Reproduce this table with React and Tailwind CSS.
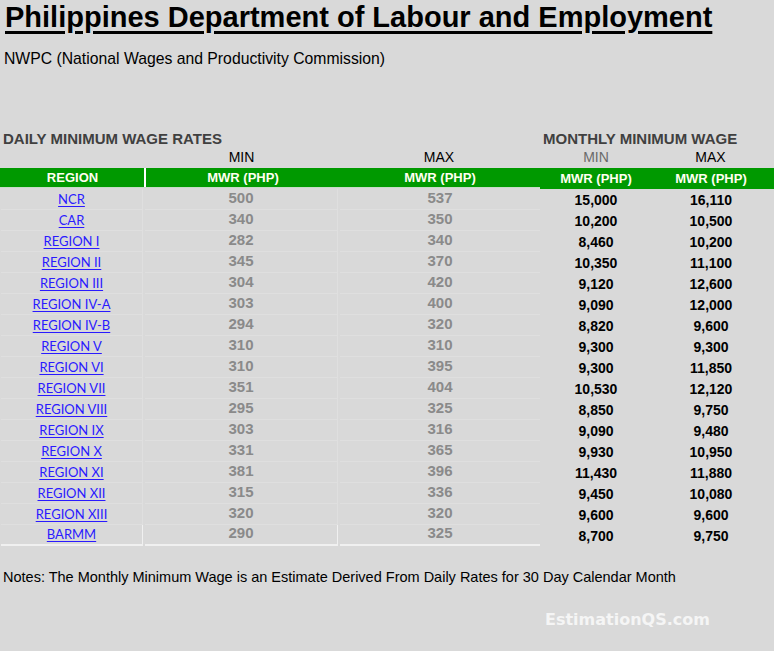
import React from "react";

const rows = [
  ["NCR", 500, 537, "15,000", "16,110"],
  ["CAR", 340, 350, "10,200", "10,500"],
  ["REGION I", 282, 340, "8,460", "10,200"],
  ["REGION II", 345, 370, "10,350", "11,100"],
  ["REGION III", 304, 420, "9,120", "12,600"],
  ["REGION IV-A", 303, 400, "9,090", "12,000"],
  ["REGION IV-B", 294, 320, "8,820", "9,600"],
  ["REGION V", 310, 310, "9,300", "9,300"],
  ["REGION VI", 310, 395, "9,300", "11,850"],
  ["REGION VII", 351, 404, "10,530", "12,120"],
  ["REGION VIII", 295, 325, "8,850", "9,750"],
  ["REGION IX", 303, 316, "9,090", "9,480"],
  ["REGION X", 331, 365, "9,930", "10,950"],
  ["REGION XI", 381, 396, "11,430", "11,880"],
  ["REGION XII", 315, 336, "9,450", "10,080"],
  ["REGION XIII", 320, 320, "9,600", "9,600"],
  ["BARMM", 290, 325, "8,700", "9,750"],
];

const arial = { fontFamily: '"Liberation Sans", Arial, sans-serif' };

export default function App() {
  return (
    <div className="w-[774px] h-[651px] bg-[#d9d9d9] overflow-hidden text-black" style={arial}>
      <div className="pl-[5px] pt-[1px]">
        <h1 className="text-[29px] leading-[32px] font-bold underline decoration-[3px] underline-offset-[4px]">
          Philippines Department of Labour and Employment
        </h1>
      </div>
      <div className="pl-[4px] mt-[17px] text-[15.75px] leading-[18px]">
        NWPC (National Wages and Productivity Commission)
      </div>

      <div className="mt-[63px] flex text-[15px] leading-[16px] font-bold text-[#404040]">
        <div className="w-[540px] pl-[3px]">DAILY MINIMUM WAGE RATES</div>
        <div className="pl-[3px]">MONTHLY MINIMUM WAGE</div>
      </div>
      <div className="mt-[2px] flex text-[14px] leading-[16px]">
        <div className="w-[145px]" />
        <div className="w-[193px] text-center">MIN</div>
        <div className="w-[202px] text-center">MAX</div>
        <div className="w-[112px] text-center text-[#6a6a6a]">MIN</div>
        <div className="w-[117px] text-center">MAX</div>
      </div>

      <div className="mt-[3px] flex h-[21px] text-[13px] font-bold text-[#fffff0]">
        <div className="w-[540px] flex h-[20px] bg-[#009900] border-b border-[#c6dcc6]">
          <div className="w-[143px] ml-[1px] flex items-center justify-center">REGION</div>
          <div className="w-[2px] bg-white" />
          <div className="w-[194px] flex items-center justify-center">MWR (PHP)</div>
          <div className="w-[200px] flex items-center justify-center">MWR (PHP)</div>
        </div>
        <div className="w-[234px] flex h-[21px] bg-[#009900]">
          <div className="w-[112px] flex items-center justify-center">MWR (PHP)</div>
          <div className="w-[118px] flex items-center justify-center">MWR (PHP)</div>
        </div>
      </div>

      <div className="flex flex-col">
        {rows.map((r, i) => {
          const last = i === rows.length - 1;
          const cell = last
            ? "border-b-2 border-[#f0f0f0]"
            : "border-b border-[#dfdfdf]";
          return (
            <div key={r[0]} className="flex h-[21px]">
              <div className={`w-[142px] ml-[1px] flex items-center justify-center border-r border-[#dfdfdf] ${cell}`}>
                <a
                  href="#"
                  className="text-[13px] leading-[15px] text-[#2a1aff] underline underline-offset-[2px]"
                  style={{ fontFamily: 'Lato, "Open Sans", sans-serif' }}
                >
                  {r[0]}
                </a>
              </div>
              <div className="w-[2px]" />
              <div className={`w-[193px] flex items-center justify-center text-[15px] font-bold text-[#8a8a8a] border-r border-[#dfdfdf] ${cell} pb-[2px]`}>
                {r[1]}
              </div>
              <div className="w-[2px]" />
              <div className={`w-[200px] flex items-center justify-center text-[15px] font-bold text-[#8a8a8a] ${cell} pb-[2px]`}>
                {r[2]}
              </div>
              <div className="w-[112px] flex items-center justify-center text-[14px] font-bold pt-[2px]">
                {r[3]}
              </div>
              <div className="w-[118px] flex items-center justify-center text-[14px] font-bold pt-[2px]">
                {r[4]}
              </div>
            </div>
          );
        })}
      </div>

      <div className="mt-[23px] pl-[3px] text-[14.5px] leading-[16px]">
        Notes: The Monthly Minimum Wage is an Estimate Derived From Daily Rates for 30 Day Calendar Month
      </div>
      <div className="mt-[25px] pl-[545px] text-[16px] leading-[20px] font-bold text-[#f5f5f5]" style={{ fontFamily: '"DejaVu Sans", sans-serif' }}>
        EstimationQS.com
      </div>
    </div>
  );
}
